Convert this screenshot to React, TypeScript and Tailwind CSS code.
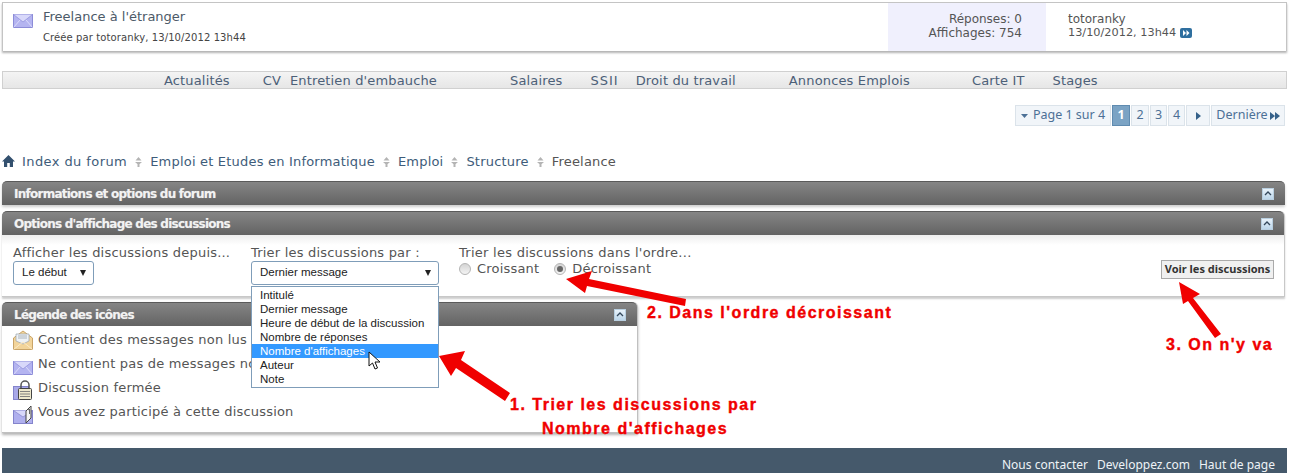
const verdana = "font-['DejaVu_Sans',sans-serif]";
const tahoma = "font-['Noto_Sans',sans-serif]";
const selectFont = "font-['Liberation_Sans',sans-serif] text-[11.5px]";

function Envelope({ tone = "blue" }: { tone?: "blue" | "gold" }) {
  const fill = tone === "gold" ? "#f3d9a0" : "#b4b4f0";
  const line = tone === "gold" ? "#c99a50" : "#8c8cd8";
  return (
    <svg width="20" height="14" viewBox="0 0 20 14" className="shrink-0">
      <rect x="0.5" y="0.5" width="19" height="13" fill={fill} stroke={line} />
      <path d="M0.5 0.5 L10 8 L19.5 0.5" fill="#d8d8fa" stroke={line} strokeWidth="0.7" />
      <path d="M0.5 13.5 L7 6 M19.5 13.5 L13 6" fill="none" stroke="#e4e4fc" strokeWidth="0.8" />
    </svg>
  );
}

function LegendIcon({ kind }: { kind: "new" | "plain" | "lock" | "posted" }) {
  if (kind === "plain") {
    return (
      <div className="mt-[5px]">
        <Envelope />
      </div>
    );
  }
  if (kind === "new") {
    return (
      <svg width="20" height="20" viewBox="0 0 20 20" className="shrink-0 -mt-[2px]">
        <path d="M0.5 8 L10 1 L19.5 8 V19.5 H0.5 Z" fill="#f2d49a" stroke="#c9a468" />
        <path d="M3 4 H16 V11 L10 14 L3 11 Z" fill="#eef2f6" stroke="#9aa4ae" strokeWidth="0.7" />
        <path d="M5 6 H14 M5 8 H14" stroke="#9aa4ae" strokeWidth="0.8" />
        <path d="M0.5 19.5 L10 12 L19.5 19.5" fill="none" stroke="#fbe9c6" />
      </svg>
    );
  }
  if (kind === "lock") {
    return (
      <svg width="20" height="20" viewBox="0 0 20 20" className="shrink-0">
        <rect x="0.5" y="6.5" width="15" height="13" fill="#a9a9e8" stroke="#8484cc" />
        <path d="M8 8 V5 a4 4 0 0 1 8 0 V8" fill="none" stroke="#555" strokeWidth="1.5" />
        <rect x="5.5" y="8.5" width="13" height="11" rx="1" fill="#eee8cc" stroke="#444" />
        <path d="M7 11.5 H17 M7 14 H17 M7 16.5 H17" stroke="#777" strokeWidth="0.9" />
      </svg>
    );
  }
  return (
    <svg width="20" height="20" viewBox="0 0 20 20" className="shrink-0">
      <rect x="0.5" y="6.5" width="19" height="13" fill="#b0b0ee" stroke="#8484cc" />
      <path d="M0.5 6.5 L10 13 L19.5 6.5" fill="#d8d8fa" stroke="#8484cc" strokeWidth="0.7" />
      <path d="M13 19 V7 L18 2 V14 Z" fill="#f4f4f4" stroke="#444" />
      <path d="M15 6 L16.5 5 V10" fill="none" stroke="#444" strokeWidth="0.8" />
    </svg>
  );
}

function Collapse() {
  return (
    <span className="flex h-[12px] w-[12px] items-center justify-center border border-[#b9cfe0] bg-[linear-gradient(#e8f2fa,#bcd6ea)]">
      <svg width="8" height="5" viewBox="0 0 8 5">
        <path d="M1 4 L4 1 L7 4" fill="none" stroke="#33475b" strokeWidth="1.3" />
      </svg>
    </span>
  );
}

function PanelHead({ title }: { title: string }) {
  return (
    <div className="flex h-[24px] items-center justify-between rounded-t-[5px] border-t border-[#5a5a5a] bg-[linear-gradient(#858585,#636363)] pl-[12px] pr-[11px]">
      <span className={`${verdana} text-[12px] font-bold tracking-[-0.75px] text-[#f2f2f2] [text-shadow:0_0_1px_rgba(255,255,255,0.4)]`}>{title}</span>
      <Collapse />
    </div>
  );
}

function Crumb({ children }: { children: string }) {
  return <span className="tracking-[0.2px] text-[#3e5c7a]">{children}</span>;
}

function Sep() {
  return (
    <svg width="9" height="10" viewBox="0 0 9 10" className="mx-[7px] mt-[2px]">
      <path d="M4.5 0 L7.5 3.5 H1.5 Z M3.5 5 H5.5 V10 H3.5 Z M1 5 H8 L4.5 8 Z" fill="#b4b4b4" />
    </svg>
  );
}

function PageBtn({ children, className = "", active }: { children: React.ReactNode; className?: string; active?: boolean }) {
  const look = active ? "border-[#5f8bb0] bg-[#7ba3c4] font-bold text-white" : "border-[#dbe3ea] bg-[#f1f5f9] text-[#4c7096]";
  return <span className={`flex h-[21px] items-center justify-center border ${look} ${className}`}>{children}</span>;
}

function Radio({ checked }: { checked?: boolean }) {
  return (
    <span className="flex h-[12px] w-[12px] items-center justify-center rounded-full border border-[#b4b4b4] bg-[linear-gradient(#d4d4d4,#f4f4f4)]">
      {checked && <span className="h-[6px] w-[6px] rounded-full bg-[#666]" />}
    </span>
  );
}

const options = ["Intitulé", "Dernier message", "Heure de début de la discussion", "Nombre de réponses", "Nombre d'affichages", "Auteur", "Note"];

const legend: { kind: "new" | "plain" | "lock" | "posted"; label: string }[] = [
  { kind: "new", label: "Contient des messages non lus" },
  { kind: "plain", label: "Ne contient pas de messages non lus" },
  { kind: "lock", label: "Discussion fermée" },
  { kind: "posted", label: "Vous avez participé à cette discussion" },
];

const redText =
  "absolute font-['Liberation_Sans',sans-serif] text-[16px] font-bold tracking-[1.5px] text-[#f00000] [-webkit-text-stroke:0.4px_#f00000] whitespace-nowrap";

export default function App() {
  return (
    <div className={`relative h-[473px] w-[1295px] overflow-hidden bg-white ${verdana} text-[13px] text-[#555]`}>
      {/* discussion row */}
      <div className="ml-[2px] mt-[2px] flex h-[49px] w-[1285px] border-x border-t border-[#c4c4c4] shadow-[0_2px_2px_rgba(0,0,0,0.3)]">
        <div className="flex flex-1 pl-[10px]">
          <div className="mt-[11px]">
            <Envelope />
          </div>
          <div className="ml-[10px] mt-[6px]">
            <div className="text-[13px] leading-[16px] text-[#4c5a68]">Freelance à l'étranger</div>
            <div className="mt-[7px] text-[10px] leading-[12px] tracking-[0.1px] text-[#444]">Créée par totoranky, 13/10/2012 13h44</div>
          </div>
        </div>
        <div className="w-[158px] bg-[#f0f0fd] pr-[24px] pt-[9px] text-right text-[12px] leading-[14px] text-[#555]">
          <div>Réponses: 0</div>
          <div>Affichages: 754</div>
        </div>
        <div className="w-[240px] pl-[22px] pt-[9px] text-[12px] leading-[14px] text-[#555]">
          <div>totoranky</div>
          <div className="flex items-center gap-[4px] text-[11.3px]">
            13/10/2012, 13h44
            <svg width="12" height="10" viewBox="0 0 12 10">
              <rect width="12" height="10" rx="2" fill="#2f6f9f" />
              <path d="M3 2 L6 5 L3 8 Z M6.5 2 L9.5 5 L6.5 8 Z" fill="#fff" />
            </svg>
          </div>
        </div>
      </div>

      {/* nav bar */}
      <div className="ml-[2px] mt-[20px] flex h-[18px] w-[1285px] items-center border border-[#d0d0d0] bg-[linear-gradient(#f4f4f4,#e6e6e6)] text-[13px] leading-none tracking-[0.15px] text-[#4c6078]">
        <span className="ml-[161px]">Actualités</span>
        <span className="ml-[33px]">CV</span>
        <span className="ml-[9px]">Entretien d'embauche</span>
        <span className="ml-[73px]">Salaires</span>
        <span className="ml-[28px] tracking-[1px]">SSII</span>
        <span className="ml-[17px]">Droit du travail</span>
        <span className="ml-[53px]">Annonces Emplois</span>
        <span className="ml-[62px]">Carte IT</span>
        <span className="ml-[28px]">Stages</span>
      </div>

      {/* pagination */}
      <div className={`mt-[16px] flex justify-end gap-[1px] pr-[10px] ${tahoma} text-[12.5px]`}>
        <PageBtn className="w-[96px] gap-[5px]">
          <svg width="7" height="4" viewBox="0 0 7 4">
            <path d="M0 0 H7 L3.5 4 Z" fill="#4c7096" />
          </svg>
          Page 1 sur 4
        </PageBtn>
        <PageBtn active className="w-[18px]">1</PageBtn>
        <PageBtn className="w-[18px]">2</PageBtn>
        <PageBtn className="w-[17px]">3</PageBtn>
        <PageBtn className="w-[17px]">4</PageBtn>
        <PageBtn className="w-[24px]">
          <svg width="5" height="8" viewBox="0 0 5 8">
            <path d="M0 0 L5 4 L0 8 Z" fill="#35618a" />
          </svg>
        </PageBtn>
        <PageBtn className="w-[74px] gap-[2px]">
          Dernière
          <svg width="10" height="8" viewBox="0 0 10 8">
            <path d="M0 0 L5 4 L0 8 Z M5 0 L10 4 L5 8 Z" fill="#35618a" />
          </svg>
        </PageBtn>
      </div>

      {/* breadcrumb */}
      <div className="ml-[2px] mt-[26px] flex h-[18px] items-center text-[13px] leading-none">
        <svg width="13" height="12" viewBox="0 0 13 12" className="mr-[7px]">
          <path d="M6.5 0 L13 6.5 H11 V12 H7.8 V8 H5.2 V12 H2 V6.5 H0 Z" fill="#33506e" />
        </svg>
        <span className="tracking-[0.42px] text-[#3e5c7a]">Index du forum</span>
        <Sep />
        <Crumb>Emploi et Etudes en Informatique</Crumb>
        <Sep />
        <Crumb>Emploi</Crumb>
        <Sep />
        <Crumb>Structure</Crumb>
        <Sep />
        <span className="tracking-[0.2px] text-[#555]">Freelance</span>
      </div>

      {/* forum info panel */}
      <div className="ml-[2px] mt-[11px] w-[1283px] rounded-t-[5px] shadow-[0_2px_3px_rgba(0,0,0,0.2)]">
        <PanelHead title="Informations et options du forum" />
      </div>

      {/* display options panel */}
      <div className="ml-[2px] mt-[6px] h-[86px] w-[1283px] rounded-t-[5px] border-b border-r border-[#c8c8c8] shadow-[0_2px_2px_rgba(0,0,0,0.2)]">
        <PanelHead title="Options d'affichage des discussions" />
        <div className="flex bg-[linear-gradient(#eeeeee,#ffffff_10px)] pl-[11px] pt-[11px]">
          <div className="w-[238px]">
            <div className="text-[13px] leading-[14px] tracking-[0.2px]">Afficher les discussions depuis...</div>
            <div className={`mt-[1px] flex h-[24px] w-[81px] items-center justify-between rounded-[3px] border border-[#7f9db9] pl-[8px] pr-[7px] ${selectFont} text-[#222]`}>
              Le début
              <span className="h-0 w-0 border-x-[3.5px] border-t-[6px] border-x-transparent border-t-[#222]" />
            </div>
          </div>
          <div className="w-[208px]">
            <div className="text-[13px] leading-[14px] tracking-[0.2px]">Trier les discussions par :</div>
            <div className={`mt-[1px] flex h-[24px] w-[188px] items-center justify-between rounded-[3px] border border-[#7f9db9] pl-[8px] pr-[7px] ${selectFont} text-[#222]`}>
              Dernier message
              <span className="h-0 w-0 border-x-[3.5px] border-t-[6px] border-x-transparent border-t-[#222]" />
            </div>
          </div>
          <div>
            <div className="text-[13px] leading-[14px] tracking-[0.27px]">Trier les discussions dans l'ordre...</div>
            <div className="mt-[1px] flex items-center text-[13px] leading-[16px] tracking-[0.2px]">
              <Radio />
              <span className="ml-[6px]">Croissant</span>
              <span className="ml-[15px]">
                <Radio checked />
              </span>
              <span className="ml-[6px]">Décroissant</span>
            </div>
          </div>
          <button className={`ml-auto mr-[10px] mt-[14px] h-[19px] w-[113px] border border-[#aaa] bg-[#f0f0f0] ${tahoma} text-[11px] font-bold text-[#333]`}>
            Voir les discussions
          </button>
        </div>
      </div>

      {/* legend panel */}
      <div className="ml-[2px] mt-[5px] h-[131px] w-[636px] rounded-t-[5px] border-r border-b border-[#c0c0c0] shadow-[0_2px_3px_rgba(0,0,0,0.3)]">
        <PanelHead title="Légende des icônes" />
        <div className="flex flex-col gap-[4px] pl-[11px] pt-[6px]">
          {legend.map((item) => (
            <div key={item.kind} className="flex h-[20px] items-start gap-[5px] text-[13px] leading-[16px] tracking-[0.2px]">
              <LegendIcon kind={item.kind} />
              <span>{item.label}</span>
            </div>
          ))}
        </div>
      </div>

      {/* footer */}
      <div className={`ml-[2px] mt-[15px] flex h-[40px] w-[1285px] justify-end gap-[9px] bg-[#45596b] pr-[12px] pt-[9px] ${tahoma} text-[12px] leading-[16px] text-[#eef3f7]`}>
        <span>Nous contacter</span>
        <span>Developpez.com</span>
        <span>Haut de page</span>
      </div>

      {/* open select list */}
      <div className={`absolute left-[251px] top-[286px] w-[188px] border border-[#7f9db9] bg-white py-[1px] ${selectFont} leading-[14px] text-[#222]`}>
        {options.map((option) => (
          <div key={option} className={option === "Nombre d'affichages" ? "bg-[#3399ff] pl-[8px] text-white" : "pl-[8px]"}>
            {option}
          </div>
        ))}
      </div>

      {/* mouse pointer */}
      <svg width="13" height="19" viewBox="0 0 13 19" className="absolute left-[368px] top-[351px]">
        <path d="M1 1 V15 L4.5 12 L7 18 L9.5 17 L7 11 H12 Z" fill="#fff" stroke="#111" strokeWidth="1" />
      </svg>

      {/* red annotations */}
      <svg width="1295" height="473" viewBox="0 0 1295 473" className="pointer-events-none absolute left-0 top-0">
        <path d="M439 356 L465 351 L461 360 L510 393 L505 401 L456 368 L451 376 Z" fill="#f00000" />
        <path d="M566 279 L592 271 L589 279 L686 299 L685 306 L587 286 L585 293 Z" fill="#f00000" />
        <path d="M1179 282 L1200 294 L1193 298 L1221 334 L1215 338 L1188 301 L1183 304 Z" fill="#f00000" />
      </svg>
      <span className={`${redText} left-[647px] top-[301px]`}>2. Dans l'ordre décroissant</span>
      <span className={`${redText} left-[1166px] top-[333px]`}>3. On n'y va</span>
      <span className={`${redText} left-[510px] top-[393px]`}>1. Trier les discussions par</span>
      <span className={`${redText} left-[542px] top-[417px]`}>Nombre d'affichages</span>
    </div>
  );
}
